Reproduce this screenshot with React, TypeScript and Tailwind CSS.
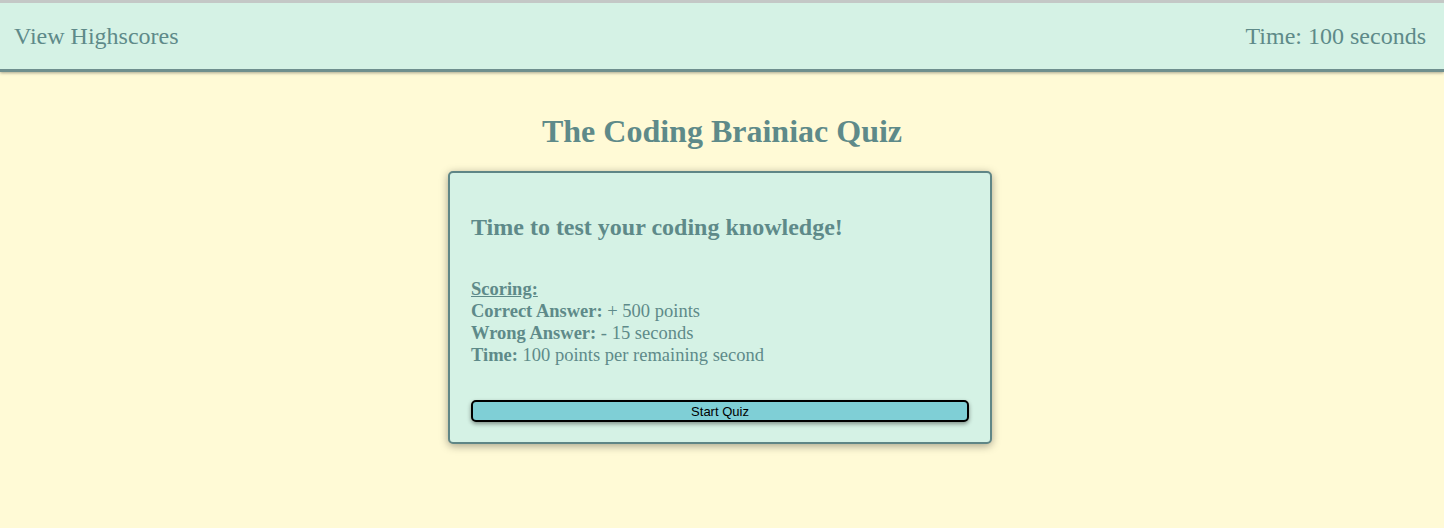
export default function App() {
  return (
    <div className="min-h-screen bg-[#fffad6] font-['Liberation_Serif',serif] text-[#5e8a89]">
      {/* top bar */}
      <header className="flex items-center justify-between h-[72px] pl-[14px] pr-[18px] bg-[#d5f2e5] border-t-[3px] border-t-[#c4c8c6] border-b-[3px] border-b-[#6f8f8e] shadow-[0_1px_3px_rgba(0,0,0,0.35)]">
        <span className="text-[24px]">View Highscores</span>
        <span className="text-[24px]">Time: 100 seconds</span>
      </header>

      <main className="flex flex-col items-center pt-[40px]">
        <h1 className="text-[32px] font-bold leading-[38px]">The Coding Brainiac Quiz</h1>

        <div className="mt-[21px] mr-[4px] w-[544px] px-[21px] pb-[19px] bg-[#d5f2e5] border-2 border-[#5f8686] rounded-[5px] shadow-[0_2px_8px_rgba(0,0,0,0.35)]">
          <h2 className="mt-[40px] text-[24px] font-bold leading-[28px]">
            Time to test your coding knowledge!
          </h2>
          <div className="mt-[37px] text-[18.5px] leading-[22px]">
            <p className="font-bold underline">Scoring:</p>
            <p>
              <b>Correct Answer:</b> + 500 points
            </p>
            <p>
              <b>Wrong Answer:</b> - 15 seconds
            </p>
            <p>
              <b>Time:</b> 100 points per remaining second
            </p>
          </div>
          <button className="mt-[34px] w-full h-[22px] bg-[#7fcfd6] border-2 border-black rounded-[5px] shadow-[0_2px_4px_rgba(0,0,0,0.4)] font-['Liberation_Sans',sans-serif] text-[13px] text-black leading-none">
            Start Quiz
          </button>
        </div>
      </main>
    </div>
  );
}
